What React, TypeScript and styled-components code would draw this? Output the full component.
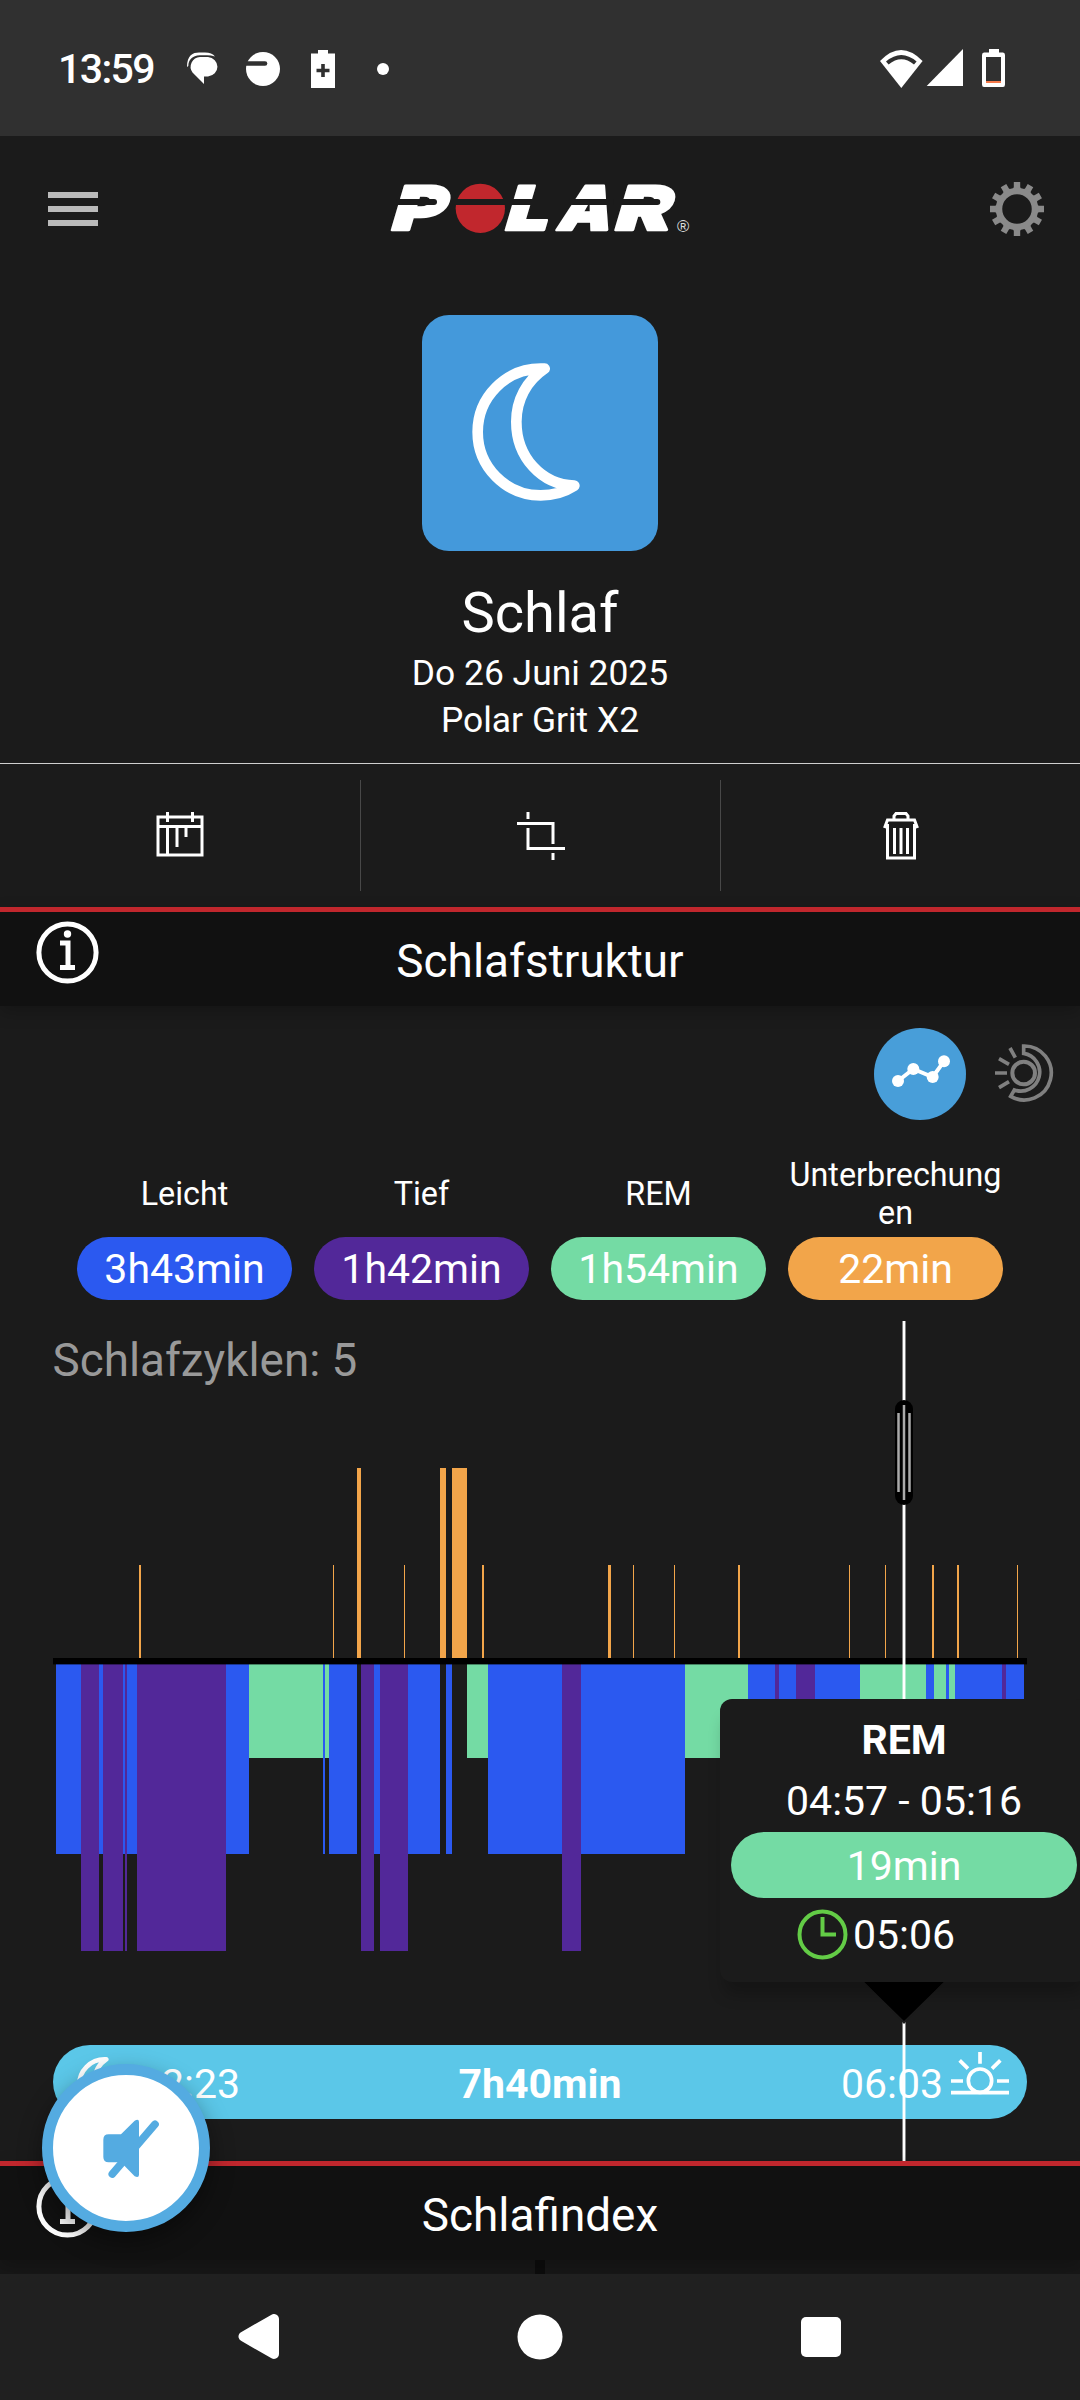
import React from "react";
import styled, { createGlobalStyle } from "styled-components";

const colors = {
  page: "#1b1b1b",
  status: "#303030",
  section: "#111111",
  nav: "#202020",
  red: "#c1272d",
  light: "#2b59f0",
  deep: "#522899",
  rem: "#74dba4",
  wake: "#f2a54a",
  sky: "#5bc7e8",
};

const GlobalStyle = createGlobalStyle`
  *, *::before, *::after { box-sizing: border-box; }
  html, body { margin: 0; padding: 0; background: ${colors.page}; }
  svg { display: block; flex: none; }
`;

const Screen = styled.div`
  position: relative;
  display: flex;
  flex-direction: column;
  width: 1080px;
  height: 2400px;
  overflow: hidden;
  background: ${colors.page};
  color: #fff;
  font-family: Roboto, "Noto Sans", sans-serif;
`;

const StatusBar = styled.header`
  display: flex;
  justify-content: space-between;
  align-items: center;
  flex: none;
  height: 136px;
  padding: 2px 75px 0 58px;
  background: ${colors.status};
`;

const StatusGroup = styled.div<{ $gap: number }>`
  display: flex;
  align-items: center;
  gap: ${(p) => p.$gap}px;
`;

const Clock = styled.span`
  width: 102px;
  font-size: 41px;
  font-weight: 500;
  line-height: 48px;
  letter-spacing: -1.6px;
`;

const AppBar = styled.div`
  display: grid;
  grid-template-columns: 1fr auto 1fr;
  align-items: center;
  flex: none;
  height: 145px;
  padding: 0 35px 0 48px;
`;

const AppBarLogo = styled.div`
  margin-left: -13px;
`;

const AppBarEnd = styled.div`
  display: flex;
  justify-content: flex-end;
`;

const MenuButton = styled.button`
  display: flex;
  flex-direction: column;
  gap: 8px;
  width: 50px;
  padding: 0;
  border: 0;
  background: none;
`;

const MenuLine = styled.span`
  height: 6px;
  background: #bababa;
`;

const Hero = styled.section`
  display: flex;
  flex-direction: column;
  align-items: center;
  flex: none;
  height: 483px;
  padding-top: 34px;
  border-bottom: 1px solid #cfcfcf;
`;

const Tile = styled.div`
  width: 236px;
  height: 236px;
  border-radius: 27px;
  background: #4499db;
`;

const Title = styled.h1`
  margin: 29px 0 4px;
  font-size: 56px;
  font-weight: 400;
  line-height: 66px;
`;

const Subtitle = styled.div`
  font-size: 35.4px;
  line-height: 47px;
`;

const Toolbar = styled.div`
  display: grid;
  grid-template-columns: repeat(3, 1fr);
  flex: none;
  height: 143px;
  padding: 16px 0;
`;

const Tool = styled.button`
  display: flex;
  justify-content: center;
  align-items: center;
  padding: 0;
  border: 0;
  background: none;
  & + & {
    border-left: 1px solid #484848;
  }
`;

const SectionBar = styled.div`
  display: grid;
  grid-template-columns: 100px 1fr 100px;
  flex: none;
  position: relative;
  height: 99px;
  border-top: 5px solid ${colors.red};
  background: ${colors.section};
  box-shadow: 0 6px 16px rgba(0, 0, 0, 0.22);
`;

const InfoSlot = styled.div`
  padding: 9px 0 0 36px;
`;

const SectionTitle = styled.h2`
  margin: 0;
  padding-top: 2px;
  font-size: 45.9px;
  font-weight: 400;
  line-height: 94px;
  text-align: center;
`;

const Body = styled.section`
  position: relative;
  display: flex;
  flex-direction: column;
  flex: none;
  height: 1155px;
  padding-top: 22px;
`;

const Toggles = styled.div`
  display: flex;
  justify-content: flex-end;
  align-items: center;
  gap: 28px;
  height: 92px;
  padding-right: 26px;
`;

const ActiveToggle = styled.div`
  width: 92px;
  height: 92px;
  border-radius: 50%;
  background: #489ed9;
`;

const Stages = styled.div`
  display: grid;
  grid-template-columns: repeat(4, 215px);
  column-gap: 22px;
  justify-content: center;
  margin-top: 36px;
`;

const Stage = styled.div`
  display: flex;
  flex-direction: column;
`;

const StageLabel = styled.div`
  display: flex;
  justify-content: center;
  align-items: center;
  height: 76px;
  margin-bottom: 5px;
  font-size: 32.3px;
  line-height: 38px;
  text-align: center;
  word-break: break-all;
`;

const Pill = styled.div<{ $color: string; $height: number }>`
  height: ${(p) => p.$height}px;
  border-radius: 33px;
  background: ${(p) => p.$color};
  font-size: 41px;
  line-height: ${(p) => p.$height + 2}px;
  text-align: center;
`;

const Cycles = styled.div`
  margin: 34px 0 12px 52.500px;
  color: #999;
  font-size: 45.800px;
  line-height: 54px;
`;

const TimeBar = styled.div`
  display: grid;
  grid-template-columns: 1fr auto 1fr;
  align-items: center;
  height: 74px;
  margin: 85px 53px 0;
  padding: 4px 18px 0;
  border-radius: 37px;
  background: ${colors.sky};
  font-size: 41px;
  line-height: 70px;
`;

const TimeEdge = styled.div<{ $end?: boolean }>`
  display: flex;
  align-items: center;
  justify-content: ${(p) => (p.$end ? "flex-end" : "flex-start")};
  gap: ${(p) => (p.$end ? 8 : 12)}px;
  padding-left: ${(p) => (p.$end ? 0 : 5)}px;
`;

const Strong = styled.b`
  font-weight: 700;
`;

/* Cursor drawn over the chart and the time bar */
const Cursor = styled.div`
  position: absolute;
  top: 315px;
  left: 902px;
  width: 4px;
  height: 840px;
  border: solid rgba(255, 255, 255, 0.45);
  border-width: 0 1px;
  background: #fff;
  background-clip: padding-box;
`;

const Handle = styled.div`
  position: absolute;
  top: 394px;
  left: 895px;
`;

const Popover = styled.div`
  position: absolute;
  top: 693px;
  left: 720px;
  display: flex;
  flex-direction: column;
  align-items: stretch;
  width: 368px;
  height: 283px;
  padding: 10px 11px 0;
  border-radius: 12px;
  background: ${colors.page};
  box-shadow: 0 16px 16px -4px rgba(0, 0, 0, 0.24);
  font-size: 41px;
  text-align: center;
`;

const PopoverTitle = styled.b`
  font-weight: 700;
  line-height: 62px;
`;

const PopoverRange = styled.span`
  line-height: 61px;
`;

const PopoverTime = styled.div`
  display: flex;
  align-items: center;
  gap: 5px;
  height: 72px;
  padding-left: 66px;
  span { line-height: 76px; padding-top: 2px; }
`;

const Pointer = styled.div`
  position: absolute;
  top: 976px;
  left: 864px;
  height: 42px;
  background: ${colors.page};
  clip-path: polygon(0 0, 100% 0, 50% 100%);
`;

const Peek = styled.div`
  display: flex;
  justify-content: center;
  flex: none;
  height: 14px;
  background: #171717;
`;

const PeekMark = styled.span`
  width: 10px;
  height: 14px;
  background: #0c0c0c;
`;

const NavBar = styled.nav`
  position: relative;
  display: grid;
  grid-template-columns: repeat(3, 281px);
  justify-content: center;
  justify-items: center;
  align-items: center;
  flex: none;
  height: 126px;
  background: ${colors.nav};
`;

const Fab = styled.button`
  position: absolute;
  top: 2064px;
  left: 42px;
  display: flex;
  padding: 0;
  width: 168px;
  height: 168px;
  border: 11px solid #54abe1;
  border-radius: 50%;
  background: #fff;
  box-shadow: 0 10px 24px rgba(0, 0, 0, 0.4);
`;

const InfoIcon = () => (
  <svg width="63" height="63" viewBox="0 0 63 63" fill="none" stroke="#fff">
    <circle cx="31.5" cy="31.5" r="28.6" strokeWidth="5" />
    <circle cx="31.5" cy="13" r="3.7" fill="#fff" stroke="none" />
    <path d="M24 22H32V46M24 46.5H39" strokeWidth="5" />
  </svg>
);

const MOON =
  "M494 236H482A189 190 0 0 0 482 616Q538 616 583 587C485 584 409 502 409 395C409 330 440 272 494 236Z";

const Logo = () => (
  <svg width="360" height="80" viewBox="0 0 1080 240">
    <g fill="#fff" stroke="#fff" strokeWidth="8" strokeLinejoin="round" fontFamily="Inter, Roboto, sans-serif" fontWeight="900" fontSize="182">
      <text transform="translate(86 184) skewX(-16.5) scale(1.33 1)">P</text>
      <text transform="translate(428 184) skewX(-16.5) scale(1.25 1)">L</text>
      <text transform="translate(586 184) skewX(-16.5) scale(1.1 1)">A</text>
      <text transform="translate(757 184) skewX(-16.5) scale(1.36 1)">R</text>
    </g>
    <circle cx="361" cy="118" r="74" fill={colors.red} />
    <g fill={colors.page}>
      <path d="M110 90H222A9 9 0 0 1 222 108H110Z" />
      <path d="M280 90H760V108H280Z" />
      <path d="M760 90H892A9 9 0 0 1 892 108H760Z" />
    </g>
    <text x="951" y="189" fill="#ddd" fontFamily="Liberation Sans, sans-serif" fontSize="50">®</text>
  </svg>
);

const Gear = () => (
  <svg width="56" height="56" viewBox="-28 -28 56 56" fill="#8a8a8a">
    {Array.from({ length: 12 }, (_, i) => (
      <path key={i} d="M-3.2 -27H3.2V-22L5 -18H-5L-3.2 -22Z" transform={`rotate(${i * 30})`} />
    ))}
    <circle r="18" fill="none" stroke="#8a8a8a" strokeWidth="6.5" />
  </svg>
);

const CalendarIcon = () => (
  <svg width="48" height="48" viewBox="0 0 48 48" fill="none" stroke="#fff" strokeWidth="3">
    <path d="M2 5H46V43H2ZM2 14.5H46M11.5 0V10M36.5 0V10M11.5 16V42M21 16V35M30 16V25" />
  </svg>
);

const CropIcon = () => (
  <svg width="48" height="48" viewBox="0 0 48 48" fill="none" stroke="#fff" strokeWidth="3">
    <path d="M11 0V7M0 11.5H36V32M11 16V36.5H48M36 41V48" />
  </svg>
);

const TrashIcon = () => (
  <svg width="36" height="48" viewBox="0 0 36 48" fill="none" stroke="#fff" strokeWidth="3">
    <path d="M11 8V4L13 1.5H23L25 4V8M1.5 16L4.5 8H31.5L34.5 16M4.5 12V46H31.5V12" />
    <path d="M11.5 16V42M18 16V42M24.5 16V42" />
  </svg>
);

type Kind = "light" | "deep" | "rem" | "awake";

// Each stage ends at the given x and starts where the one before it ended.
const START = 56;
const STAGES: [Kind, number][] = [
  ["light", 81], ["deep", 99], ["light", 103], ["deep", 123], ["light", 125], ["deep", 127],
  ["light", 137], ["deep", 226], ["light", 249], ["rem", 323], ["light", 325], ["rem", 329],
  ["light", 357], ["awake", 361], ["deep", 374], ["light", 380], ["deep", 408], ["light", 440],
  ["awake", 446], ["light", 452], ["awake", 467], ["rem", 488], ["light", 562], ["deep", 581],
  ["light", 685], ["rem", 748], ["light", 775], ["deep", 779], ["light", 796], ["deep", 815],
  ["light", 860], ["rem", 926], ["light", 934], ["rem", 946], ["light", 949], ["rem", 955],
  ["light", 1002], ["deep", 1006], ["light", 1024],
];

const BREAKS: [number, number][] = [
  [139, 2], [333, 1], [404, 1], [482, 2], [608, 3], [633, 1], [674, 1],
  [738, 2], [849, 1], [885, 1], [932, 2], [957, 2], [1017, 1],
];

const BOTTOM = { rem: 1758, light: 1854, deep: 1951 };

const Hypnogram = () => (
  <svg width="1080" height="560" viewBox="0 1400 1080 560" shapeRendering="crispEdges">
    {STAGES.map(([kind, end], i) => {
      const x = i ? STAGES[i - 1][1] : START;
      return kind === "awake" ? (
        <rect key={i} x={x} y={1468} width={end - x} height={190} fill={colors.wake} />
      ) : (
        <rect key={i} x={x} y={1664} width={end - x} height={BOTTOM[kind] - 1664} fill={colors[kind]} />
      );
    })}
    {BREAKS.map(([x, w]) => (
      <rect key={x} x={x} y={1565} width={w} height={93} fill={colors.wake} />
    ))}
    <rect x="53" y="1658" width="974" height="6" fill="#000" />
    <rect x="53" y="1664" width="974" height="1" fill="#000" opacity="0.4" />
  </svg>
);

const legend = [
  { label: "Leicht", value: "3h43min", color: colors.light },
  { label: "Tief", value: "1h42min", color: colors.deep },
  { label: "REM", value: "1h54min", color: colors.rem },
  { label: "Unterbrechungen", value: "22min", color: colors.wake },
];

export default function App() {
  return (
    <Screen>
      <GlobalStyle />
      <StatusBar>
        <StatusGroup $gap={27}>
          <Clock>13:59</Clock>
          <svg width="32" height="34" viewBox="187 54 32 34" fill="#fff">
            <path d="M200 59H208A10.500 9.800 0 0 1 208 78.500H204V86L192.500 74.500A9.800 9.800 0 0 1 200 59Z" />
            <path d="M187 69C187 57 193 54.500 199 54.500H205Q212 54.500 215 58.500Q211 57.300 207 57.300H200C192 57.500 188.500 62 188.300 68Z" />
          </svg>
          <svg width="34" height="34" viewBox="246 52 34 34">
            <circle cx="263" cy="69" r="17" fill="#fff" />
            <path d="M244 63.5H265" stroke={colors.status} strokeWidth="4.6" strokeLinecap="round" />
          </svg>
          <svg width="32" height="38" viewBox="307 50 32 38">
            <path d="M318 50H328V53.5H335V88H311V53.5H318Z" fill="#fff" />
            <path d="M323 64V77M316.5 70.5H329.5" stroke={colors.status} strokeWidth="3.6" />
          </svg>
          <svg width="40" height="12" viewBox="0 0 40 12">
            <circle cx="17" cy="6" r="6" fill="#fff" />
          </svg>
        </StatusGroup>
        <svg width="125" height="40" viewBox="880 49 125 40">
          <path d="M901.3 88L880 61Q901 39 922.6 61Z" fill="#fff" />
          <path d="M886 61.500Q901.3 48.500 916.6 61.500L914 64.500Q901.3 54 888.600 64.500Z" fill={colors.status} />
          <path d="M963 49V86H926.7Z" fill="#fff" />
          <path d="M989 49H999V52.5H1003Q1005 52.5 1005 55V84.500Q1005 87 1003 87H984Q982 87 982 84.500V55Q982 52.5 984 52.5H989ZM986 57V83H1001V57Z" fill="#fff" fillRule="evenodd" />
          <path d="M986 81H1001V83H986Z" fill="#f5794a" />
        </svg>
      </StatusBar>

      <AppBar>
        <MenuButton aria-label="Menu">
          <MenuLine />
          <MenuLine />
          <MenuLine />
        </MenuButton>
        <AppBarLogo><Logo /></AppBarLogo>
        <AppBarEnd><Gear /></AppBarEnd>
      </AppBar>

      <Hero>
        <Tile>
          <svg width="236" height="236" viewBox="126 75 708 708">
            <path d={MOON} fill="none" stroke="#fff" strokeWidth="32" strokeLinejoin="round" />
          </svg>
        </Tile>
        <Title>Schlaf</Title>
        <Subtitle>Do 26 Juni 2025</Subtitle>
        <Subtitle>Polar Grit X2</Subtitle>
      </Hero>

      <Toolbar>
        <Tool aria-label="Kalender"><CalendarIcon /></Tool>
        <Tool aria-label="Zuschneiden"><CropIcon /></Tool>
        <Tool aria-label="Löschen"><TrashIcon /></Tool>
      </Toolbar>

      <SectionBar>
        <InfoSlot><InfoIcon /></InfoSlot>
        <SectionTitle>Schlafstruktur</SectionTitle>
      </SectionBar>

      <Body>
        <Toggles>
          <ActiveToggle>
            <svg width="92" height="92" viewBox="522 84 276 276" fill="#fff">
              <path d="M594 243L640 207L698 231L732 184" fill="none" stroke="#fff" strokeWidth="12" />
              <circle cx="594" cy="243" r="18" />
              <circle cx="640" cy="207" r="18" />
              <circle cx="698" cy="231" r="18" />
              <circle cx="732" cy="184" r="18" />
            </svg>
          </ActiveToggle>
          <svg width="60" height="60" viewBox="882 132 180 180" fill="none" stroke="#808080" strokeWidth="12">
            <circle cx="971" cy="219" r="34" />
            <path d="M971 138A81 81 0 1 1 932 289L943 270A57 57 0 1 0 971 160Z" strokeWidth="11" />
            <path d="M885 219H921M897 176L927 193M930 144L946 173M897 263L927 245" strokeWidth="11" />
          </svg>
        </Toggles>

        <Stages>
          {legend.map((s) => (
            <Stage key={s.label}>
              <StageLabel>{s.label}</StageLabel>
              <Pill $color={s.color} $height={63}>{s.value}</Pill>
            </Stage>
          ))}
        </Stages>

        <Cycles>Schlafzyklen: 5</Cycles>
        <Hypnogram />

        <TimeBar>
          <TimeEdge>
            <svg width="50" height="56" viewBox="270 212 370 414">
              <path d={MOON} fill="none" stroke="#fff" strokeWidth="34" strokeLinejoin="round" />
            </svg>
            22:23
          </TimeEdge>
          <Strong>7h40min</Strong>
          <TimeEdge $end>
            06:03
            <svg width="58" height="64" viewBox="813 276 174 192" fill="none" stroke="#fff" strokeWidth="11">
              <circle cx="900" cy="362" r="35" />
              <path d="M813 398H987M813 363H849M951 363H987M900 276V311M839 301L864 326M961 301L936 326" />
            </svg>
          </TimeEdge>
        </TimeBar>

        <Cursor />
        <Handle>
          <svg width="18" height="105" viewBox="0 0 18 105">
            <rect width="18" height="105" rx="9" fill="#000" />
            <path d="M3.500 13V92M9 5V100M14.500 13V92" stroke="#aaa" strokeWidth="2.500" />
          </svg>
        </Handle>
        <Popover>
          <PopoverTitle>REM</PopoverTitle>
          <PopoverRange>04:57 - 05:16</PopoverRange>
          <Pill $color={colors.rem} $height={66}>19min</Pill>
          <PopoverTime>
            <svg width="51" height="51" viewBox="0 0 51 51" fill="none" stroke="#63cc46" strokeWidth="4">
              <circle cx="25.500" cy="25.500" r="23" />
              <path d="M25.500 8V25.500H39" />
            </svg>
            <span>05:06</span>
          </PopoverTime>
        </Popover>
        <Pointer>
          <svg width="80" height="42" viewBox="0 0 80 42">
            <path d="M0 0H80L40 39Z" fill="#000" />
          </svg>
        </Pointer>
      </Body>

      <SectionBar>
        <InfoSlot><InfoIcon /></InfoSlot>
        <SectionTitle>Schlafindex</SectionTitle>
      </SectionBar>
      <Peek><PeekMark /></Peek>

      <Fab aria-label="Ton aus">
        <svg width="146" height="146" viewBox="159 165 438 438" fill="#54abe1">
          <path d="M326 343H363L404 302Q417 295 417 306V464Q417 475 404 469L363 427H326Q310 427 310 411V359Q310 343 326 343Z" />
          <path d="M465 313L337 462" stroke="#54abe1" strokeWidth="23" strokeLinecap="round" />
        </svg>
      </Fab>

      <NavBar>
        <svg width="42" height="46" viewBox="238 2315 42 46" fill="#fff" stroke="#fff" strokeWidth="10" strokeLinejoin="round">
          <path d="M243.500 2337.500L274 2320V2355Z" />
        </svg>
        <svg width="46" height="46" viewBox="0 0 46 46">
          <circle cx="23" cy="23" r="22.500" fill="#fff" />
        </svg>
        <svg width="40" height="40" viewBox="0 0 40 40">
          <rect width="40" height="40" rx="5" fill="#fff" />
        </svg>
      </NavBar>
    </Screen>
  );
}
